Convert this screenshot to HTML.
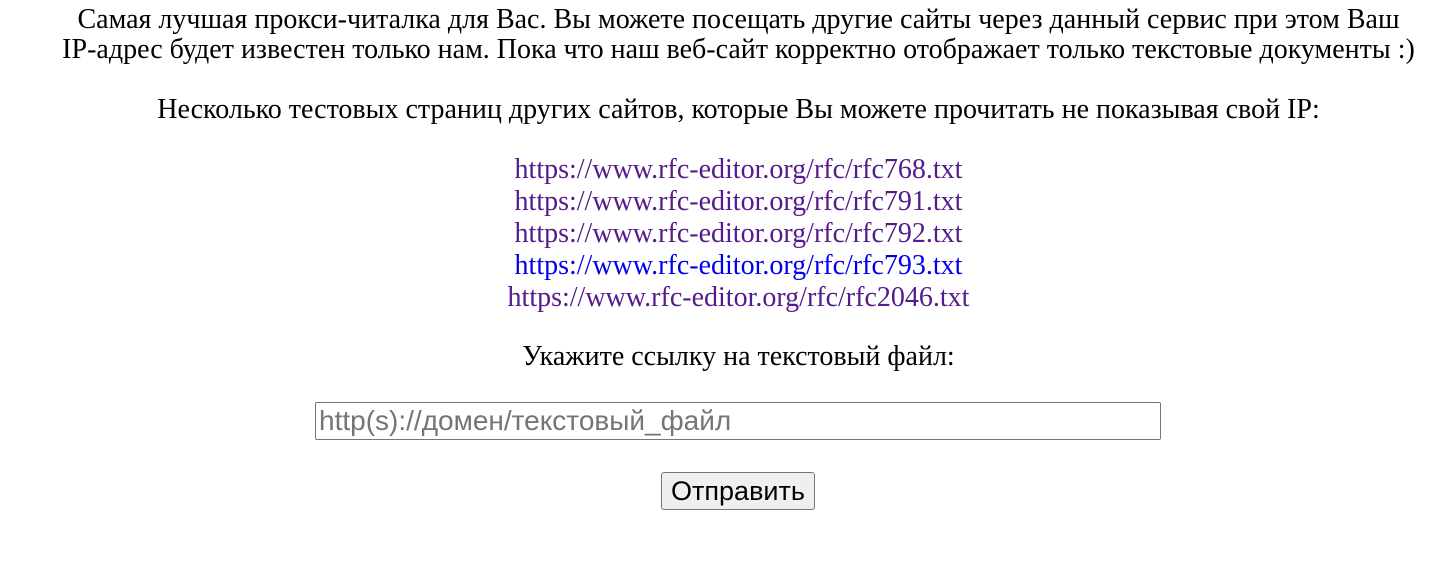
<!DOCTYPE html>
<html><head><meta charset="utf-8"><style>
body{margin:0;width:1451px;height:566px;background:#fff;font-family:"Liberation Serif",serif;font-size:28px;color:#000;position:relative;overflow:hidden}
.c{position:absolute;left:13px;width:1451px;text-align:center;white-space:nowrap}
a{color:#551a8b;text-decoration:none}
.inp{position:absolute;left:315px;top:402px;border:1px solid #767676;border-radius:2px;font-family:"Liberation Sans",sans-serif;font-size:28px;color:#757575;line-height:36px;padding-left:3px;box-sizing:border-box;width:846px;height:38px}
.btn{position:absolute;left:661px;top:472px;width:154px;height:38px;border:1px solid #767676;border-radius:3px;background:#efefef;box-sizing:border-box;font-family:"Liberation Sans",sans-serif;font-size:27px;text-align:center;line-height:36px}
</style></head><body>
<div class="c" style="top:5px;line-height:30px">Самая лучшая прокси-читалка для Вас. Вы можете посещать другие сайты через данный сервис при этом Ваш<br>IP-адрес будет известен только нам. Пока что наш веб-сайт корректно отображает только текстовые документы :)</div>
<div class="c" style="top:95px;line-height:30px">Несколько тестовых страниц других сайтов, которые Вы можете прочитать не показывая свой IP:</div>
<div class="c" style="top:154px;line-height:32px"><a>https://www.rfc-editor.org/rfc/rfc768.txt</a><br><a>https://www.rfc-editor.org/rfc/rfc791.txt</a><br><a>https://www.rfc-editor.org/rfc/rfc792.txt</a><br><a style="color:#0000ee">https://www.rfc-editor.org/rfc/rfc793.txt</a><br><a>https://www.rfc-editor.org/rfc/rfc2046.txt</a></div>
<div class="c" style="top:342px;line-height:30px">Укажите ссылку на текстовый файл:</div>
<div class="inp">http(s)://домен/текстовый_файл</div>
<div class="btn">Отправить</div>
</body></html>
